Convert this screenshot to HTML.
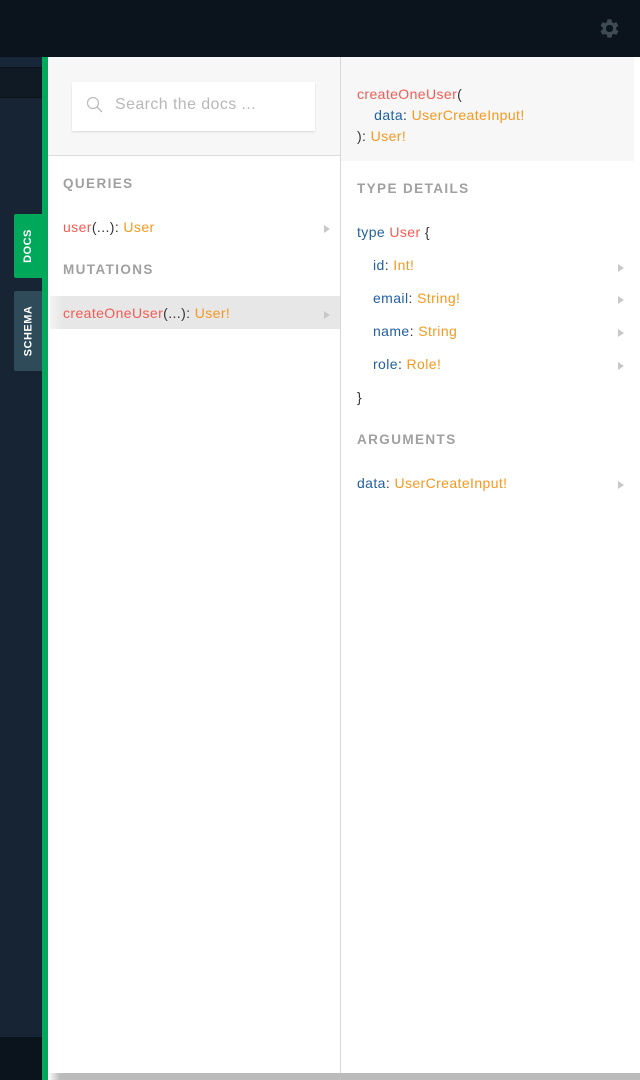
<!DOCTYPE html>
<html><head><meta charset="utf-8"><style>
*{margin:0;padding:0;box-sizing:border-box}
body{width:640px;height:1080px;overflow:hidden;background:#0b141c;font-family:"Liberation Sans",sans-serif;position:relative}
.a{position:absolute}
.t{font-size:14px;white-space:nowrap;letter-spacing:.4px}
.r{color:#f25c54}.o{color:#f6981e}.b{color:#1f61a0}.k{color:#333}
.h{font-size:13.5px;letter-spacing:1.4px;color:#a0a0a0;font-weight:bold}
.tri{position:absolute;width:0;height:0;border-left:6px solid #c8c8c8;border-top:4px solid transparent;border-bottom:4px solid transparent}
</style></head><body>
<div class="a" style="left:0;top:0;width:640px;height:57px;background:#0b141c"></div>
<svg class="a" style="left:597px;top:16px" width="25" height="25" viewBox="0 0 24 24"><path fill="#3f4a52" d="M19.4 13a7.5 7.5 0 0 0 0-2l2.1-1.6-2-3.5-2.5 1a7.6 7.6 0 0 0-1.7-1L15 3.2h-4l-.4 2.7a7.6 7.6 0 0 0-1.7 1l-2.5-1-2 3.5L6.6 11a7.5 7.5 0 0 0 0 2l-2.2 1.6 2 3.5 2.5-1a7.6 7.6 0 0 0 1.7 1l.4 2.7h4l.4-2.7a7.6 7.6 0 0 0 1.7-1l2.5 1 2-3.5zM13 15.5a3.5 3.5 0 1 1 0-7 3.5 3.5 0 0 1 0 7z" transform="translate(-1 0)"/></svg>
<div class="a" style="left:0;top:57px;width:42px;height:980px;background:#172433"></div>
<div class="a" style="left:0;top:57px;width:42px;height:10px;background:#18263a"></div>
<div class="a" style="left:0;top:67px;width:42px;height:31px;background:#0f1a25;border-top:1px solid #0a1219;border-bottom:1px solid #0a1219"></div>
<div class="a" style="left:0;top:1037px;width:42px;height:43px;background:#0b141c"></div>
<div class="a" style="left:14px;top:214px;width:28px;height:64px;background:#00a85a;border-radius:2px 0 0 2px"></div>
<div class="a" style="left:14px;top:214px;width:28px;height:64px;display:flex;align-items:center;justify-content:center"><span style="transform:rotate(-90deg);color:#fff;font-size:11px;font-weight:bold;letter-spacing:.5px">DOCS</span></div>
<div class="a" style="left:14px;top:291px;width:28px;height:80px;background:#2f4a58;border-radius:2px 0 0 2px;display:flex;align-items:center;justify-content:center"><span style="transform:rotate(-90deg);color:#fff;font-size:11px;font-weight:bold;letter-spacing:.5px">SCHEMA</span></div>
<div class="a" style="left:42px;top:57px;width:6px;height:1023px;background:#00a85a"></div>
<div class="a" style="left:48px;top:57px;width:592px;height:1023px;background:#fff"></div>
<div class="a" style="left:48px;top:57px;width:292px;height:99px;background:#f7f7f7;border-bottom:1px solid #dcdcdc"></div>
<div class="a" style="left:72px;top:82px;width:243px;height:49px;background:#fff;box-shadow:0 1px 2px rgba(0,0,0,.12)"></div>
<svg class="a" style="left:86px;top:96px" width="18" height="18" viewBox="0 0 18 18"><circle cx="7" cy="7" r="5.5" fill="none" stroke="#bbb" stroke-width="1.2"/><line x1="11" y1="11" x2="16" y2="16" stroke="#bbb" stroke-width="1.3"/></svg>
<div class="a t" style="left:115px;top:96px;font-size:16px;color:#b8b8b8">Search the docs ...</div>
<div class="a h" style="left:63px;top:176px">QUERIES</div>
<div class="a t" style="left:63px;top:219px"><span class="r">user</span><span class="k">(...): </span><span class="o">User</span></div>
<div class="tri" style="left:324px;top:225px"></div>
<div class="a h" style="left:63px;top:262px">MUTATIONS</div>
<div class="a" style="left:50px;top:296px;width:290px;height:33px;background:linear-gradient(90deg,#f4f4f4 0,#e7e7e7 12px)"></div>
<div class="a t" style="left:63px;top:305px"><span class="r">createOneUser</span><span class="k">(...): </span><span class="o">User!</span></div>
<div class="tri" style="left:324px;top:311px"></div>
<div class="a" style="left:340px;top:57px;width:1px;height:1016px;background:#d8d8d8"></div>
<div class="a" style="left:341px;top:57px;width:293px;height:104px;background:#f7f7f7"></div>
<div class="a t" style="left:357px;top:84px;line-height:21px"><span class="r">createOneUser</span><span class="k">(</span><br>&nbsp;&nbsp;&nbsp;&nbsp;<span class="b">data</span><span class="k">: </span><span class="o">UserCreateInput!</span><br><span class="k">): </span><span class="o">User!</span></div>
<div class="a h" style="left:357px;top:181px">TYPE DETAILS</div>
<div class="a t" style="left:357px;top:224px"><span class="b">type </span><span class="r">User</span><span class="k"> {</span></div>
<div class="a t" style="left:373px;top:257px"><span class="b">id</span><span class="k">: </span><span class="o">Int!</span></div>
<div class="a t" style="left:373px;top:290px"><span class="b">email</span><span class="k">: </span><span class="o">String!</span></div>
<div class="a t" style="left:373px;top:323px"><span class="b">name</span><span class="k">: </span><span class="o">String</span></div>
<div class="a t" style="left:373px;top:356px"><span class="b">role</span><span class="k">: </span><span class="o">Role!</span></div>
<div class="tri" style="left:618px;top:264px"></div>
<div class="tri" style="left:618px;top:296px"></div>
<div class="tri" style="left:618px;top:329px"></div>
<div class="tri" style="left:618px;top:362px"></div>
<div class="a t k" style="left:357px;top:389px">}</div>
<div class="a h" style="left:357px;top:432px">ARGUMENTS</div>
<div class="a t" style="left:357px;top:475px"><span class="b">data</span><span class="k">: </span><span class="o">UserCreateInput!</span></div>
<div class="tri" style="left:618px;top:481px"></div>
<div class="a" style="left:48px;top:1073px;width:592px;height:7px;background:linear-gradient(90deg,#fff 0,#bbb 12px)"></div>
</body></html>
